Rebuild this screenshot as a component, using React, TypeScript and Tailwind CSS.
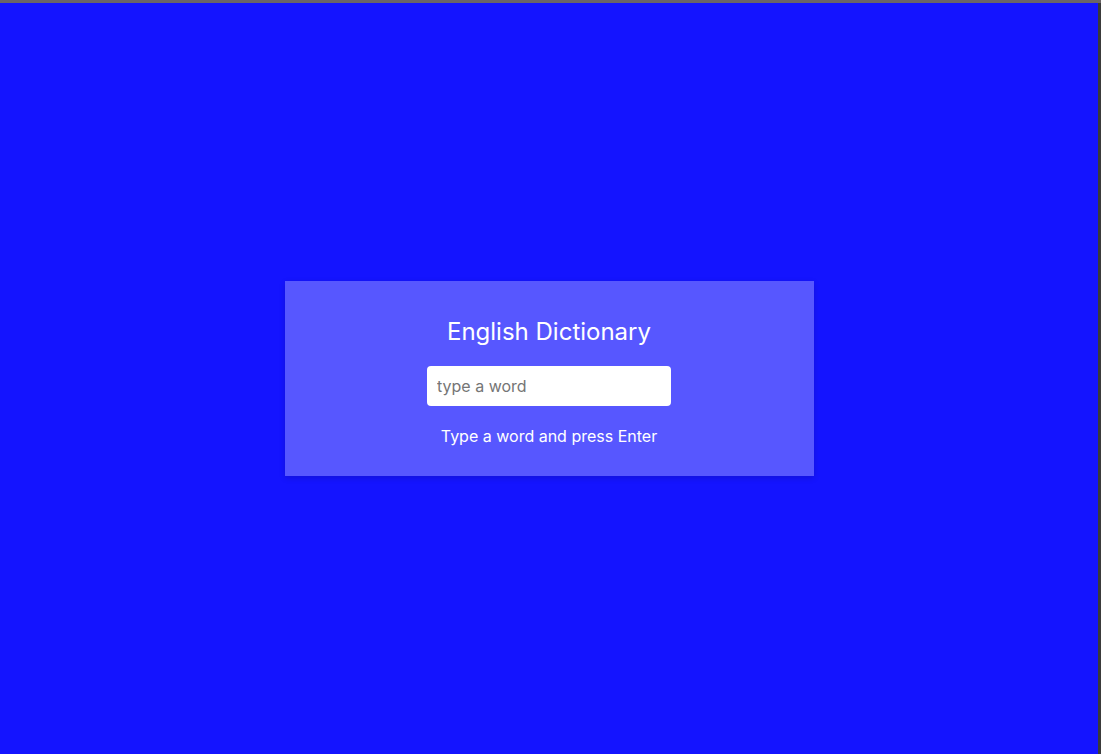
export default function App() {
  return (
    <div className="flex h-[754px] w-[1101px] flex-col bg-[#6b6566] font-['Inter',sans-serif]">
      {/* window chrome strip */}
      <div className="h-[3px] shrink-0 bg-[#6b6566]" />
      <div className="flex flex-1">
        <main className="flex flex-1 items-center justify-center bg-[#1414ff]">
          <div className="flex w-[529px] flex-col items-center bg-[#5757ff] pt-[35px] pb-[28px] shadow-[0_2px_6px_rgba(0,0,0,0.15)]">
            <h1 className="text-[24px] leading-[32px] text-white">English Dictionary</h1>
            <input
              type="text"
              placeholder="type a word"
              className="mt-[18px] h-[40px] w-[244px] rounded-[4px] bg-white px-[10px] text-[16px] text-gray-800 outline-none placeholder:text-[#757575]"
            />
            <p className="mt-[18px] text-[16px] leading-[24px] text-white">Type a word and press Enter</p>
          </div>
        </main>
        <div className="w-[3px] shrink-0 bg-[#3a3a3a]" />
      </div>
    </div>
  );
}
